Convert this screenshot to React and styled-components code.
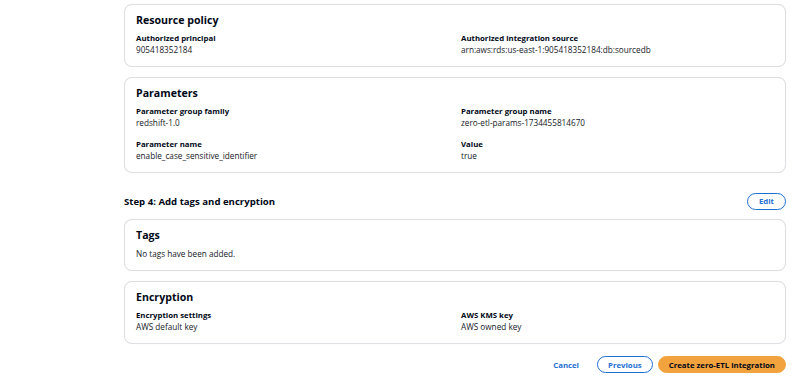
import React from 'react';
import styled, { createGlobalStyle } from 'styled-components';

const GlobalStyle = createGlobalStyle`
    html, body {
        margin: 0;
        padding: 0;
        background: #ffffff;
    }
    body {
        font-family: "Open Sans", "Noto Sans", Arial, sans-serif;
        color: #000716;
    }
`;

const Page = styled.div`
    width: 800px;
    height: 382px;
    box-sizing: border-box;
    padding: 4px 14px 0 124px;
    overflow: hidden;
`;

const Stack = styled.div`
    display: flex;
    flex-direction: column;
    gap: 10px;
`;

const Card = styled.section`
    border: 1px solid #dedee3;
    border-radius: 8px;
    padding: 7px 11px 11px;
    background: #ffffff;
    box-shadow: 0 0 1px rgba(0, 7, 22, 0.08);
`;

const CardTitle = styled.h2`
    margin: 0 0 5px;
    font-size: 10.6px;
    line-height: 16px;
    font-weight: 700;
`;

const Grid = styled.div`
    display: grid;
    grid-template-columns: 1fr 1fr;
    column-gap: 12px;
    row-gap: 11px;
`;

const Label = styled.div`
    font-size: 7.8px;
    line-height: 11px;
    font-weight: 700;
    color: #000716;
`;

const Value = styled.div`
    font-size: 8.2px;
    line-height: 11px;
    color: #16191f;
`;

const StepHeader = styled.div`
    display: flex;
    align-items: center;
    justify-content: space-between;
    height: 36px;
    margin-top: 10px;
`;

const StepTitle = styled.h3`
    margin: 0;
    font-size: 9.6px;
    font-weight: 700;
`;

const Button = styled.button`
    font-family: inherit;
    font-size: 7.8px;
    font-weight: 700;
    height: 17px;
    border-radius: 9px;
    padding: 0 ${p => p.$pad || 11}px;
    cursor: pointer;
    border: 1.5px solid ${p => (p.$variant === 'primary' ? '#f3a33e' : p.$variant === 'link' ? 'transparent' : '#1f6fd1')};
    background: ${p => (p.$variant === 'primary' ? '#f3a33e' : '#ffffff')};
    color: ${p => (p.$variant === 'primary' ? '#000716' : '#1f6fd1')};
`;

const Actions = styled.div`
    display: flex;
    justify-content: flex-end;
    align-items: center;
    gap: 5px;
    margin-top: 12px;
`;

const Field = ({ label, value }) => (
    <div>
        <Label>{label}</Label>
        <Value>{value}</Value>
    </div>
);

export default function App() {
    return (
        <Page>
            <GlobalStyle />
            <Stack>
                <Card>
                    <CardTitle>Resource policy</CardTitle>
                    <Grid>
                        <Field label="Authorized principal" value="905418352184" />
                        <Field label="Authorized integration source" value="arn:aws:rds:us-east-1:905418352184:db:sourcedb" />
                    </Grid>
                </Card>
                <Card>
                    <CardTitle>Parameters</CardTitle>
                    <Grid>
                        <Field label="Parameter group family" value="redshift-1.0" />
                        <Field label="Parameter group name" value="zero-etl-params-1734455814670" />
                        <Field label="Parameter name" value="enable_case_sensitive_identifier" />
                        <Field label="Value" value="true" />
                    </Grid>
                </Card>
            </Stack>
            <StepHeader>
                <StepTitle>Step 4: Add tags and encryption</StepTitle>
                <Button $pad={11}>Edit</Button>
            </StepHeader>
            <Stack>
                <Card>
                    <CardTitle>Tags</CardTitle>
                    <Value>No tags have been added.</Value>
                </Card>
                <Card>
                    <CardTitle>Encryption</CardTitle>
                    <Grid>
                        <Field label="Encryption settings" value="AWS default key" />
                        <Field label="AWS KMS key" value="AWS owned key" />
                    </Grid>
                </Card>
            </Stack>
            <Actions>
                <Button $variant="link" $pad={12}>Cancel</Button>
                <Button $pad={10}>Previous</Button>
                <Button $variant="primary" $pad={10}>Create zero-ETL integration</Button>
            </Actions>
        </Page>
    );
}
